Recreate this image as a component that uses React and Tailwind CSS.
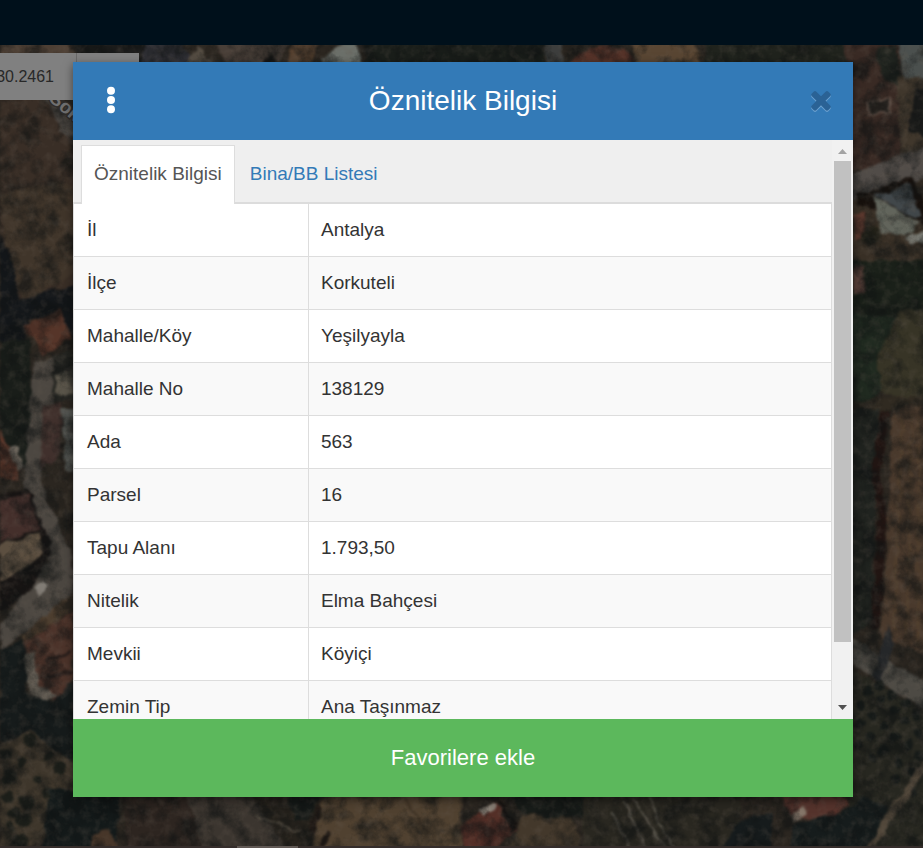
import React from "react";

const rows = [
  ["İl", "Antalya"],
  ["İlçe", "Korkuteli"],
  ["Mahalle/Köy", "Yeşilyayla"],
  ["Mahalle No", "138129"],
  ["Ada", "563"],
  ["Parsel", "16"],
  ["Tapu Alanı", "1.793,50"],
  ["Nitelik", "Elma Bahçesi"],
  ["Mevkii", "Köyiçi"],
  ["Zemin Tip", "Ana Taşınmaz"],
];

const leftTrees = [
  [10, 775, 7], [22, 762, 5], [8, 797, 6], [27, 802, 7], [14, 812, 6], [24, 820, 7],
  [48, 794, 6], [10, 828, 5], [38, 778, 4], [5, 780, 5], [50, 755, 5], [30, 740, 7],
  [60, 768, 6], [20, 842, 8], [6, 755, 6],
];

const orchard = [
  [862, 706], [872, 716], [884, 726], [896, 736], [908, 746], [919, 756],
  [868, 690], [880, 700], [893, 711], [905, 722], [917, 733],
  [880, 684], [892, 694], [905, 704], [917, 714],
  [858, 724], [870, 736], [884, 750], [898, 762], [912, 772],
  [858, 745], [872, 758], [896, 780], [914, 792],
];

function SatelliteMap() {
  return (
    <svg
      className="absolute inset-0 h-full w-full"
      viewBox="0 0 923 848"
      preserveAspectRatio="xMidYMid slice"
      aria-hidden="true"
    >
      <defs>
        <filter id="soil" x="0" y="0" width="100%" height="100%" colorInterpolationFilters="sRGB">
          <feTurbulence type="fractalNoise" baseFrequency="0.05" numOctaves="5" seed="8" />
          <feColorMatrix values="0 0 0 0 0.06  0 0 0 0 0.07  0 0 0 0 0.07  2.4 1.4 0 0 -1.6" />
        </filter>
        <filter id="grit" x="0" y="0" width="100%" height="100%" colorInterpolationFilters="sRGB">
          <feTurbulence type="fractalNoise" baseFrequency="0.11" numOctaves="3" seed="21" />
          <feColorMatrix values="0 0 0 0 0.4  0 0 0 0 0.36  0 0 0 0 0.32  0 1.8 0 0 -0.8" />
        </filter>
        <filter id="soft" x="-5%" y="-5%" width="110%" height="110%" colorInterpolationFilters="sRGB">
          <feTurbulence type="fractalNoise" baseFrequency="0.07" numOctaves="3" seed="4" result="n" />
          <feDisplacementMap in="SourceGraphic" in2="n" scale="9" xChannelSelector="R" yChannelSelector="G" />
          <feGaussianBlur stdDeviation="1" />
        </filter>
      </defs>
      <rect width="923" height="848" fill="#2b2620" />

      <g filter="url(#soft)">
        {/* western side */}
        <path d="M0 90L55 100L80 150V290L40 302L14 300L0 255Z" fill="#392e26" />
        <path d="M0 195L60 180L80 190V270L25 304L10 270Z" fill="#40352a" />
        <path d="M0 236L14 262L18 300L75 285V345L55 312L28 322L25 350H0Z" fill="#14171a" />
        <path d="M0 340H30L34 460L0 475Z" fill="#191d19" />
        <path d="M42 96L58 98L80 124V150L62 132Z" fill="#4d4843" />
        <path d="M24 326L60 309L71 340L42 356Z" fill="#563529" />
        <path d="M24 326L60 309L64 322L30 336Z" fill="#4d3026" />
        <path d="M35 362L52 358L54 400L40 480L73 560V600L0 650V625L50 560L24 484L30 400Z" fill="#4c4741" />
        <path d="M52 357L80 348V400L53 402Z" fill="#272723" />
        <path d="M55 376L75 370V392L58 396Z" fill="#5a554a" />
        <path d="M42 405L62 402L60 455L40 470Z" fill="#40302c" />
        <path d="M60 408H80V478L66 468Z" fill="#535551" />
        <path d="M0 430L20 465L18 482L0 478Z" fill="#593529" />
        <path d="M8 450L16 447L24 466L18 472Z" fill="#6d665d" />
        <path d="M0 494L28 488L52 550L30 592L0 612Z" fill="#171413" />
        <path d="M0 500L28 494L40 528L0 543Z" fill="#442f2b" />
        <path d="M0 545L38 532L44 552L26 568L0 582Z" fill="#5c4f40" />
        <path d="M34 590L44 580L48 584L38 596Z" fill="#817c75" />
        <path d="M22 636L75 590V606L30 648Z" fill="#4c3d2e" />
        <path d="M28 640L73 612V700L50 700L30 680L20 660Z" fill="#4c332a" />
        <path d="M22 655L36 650L38 684L56 696L42 704L24 680Z" fill="#625c53" />
        <path d="M45 662L70 652M46 678L72 672" stroke="#281e1b" strokeWidth="4" fill="none" />
        <path d="M0 650L24 640L26 690L50 704L73 680V800L0 740Z" fill="#161b1b" />
        <path d="M0 745L30 730L80 768V800L30 848H0Z" fill="#3e362b" />
        {leftTrees.map(([x, y, r]) => (
          <circle key={x + "-" + y} cx={x} cy={y} r={r} fill="#1c1e19" />
        ))}

        {/* strip above the dialog */}
        <path d="M0 40H70L78 68H0Z" fill="#4d3f34" />
        <path d="M72 40H150V68H80Z" fill="#1d1d1c" />
        <path d="M146 40H178L196 68H140Z" fill="#34343a" />
        <path d="M180 68L198 46L216 68Z" fill="#544c42" />
        <path d="M216 40H290L276 68H226Z" fill="#493f38" />
        <path d="M256 68L272 54L284 68Z" fill="#161514" />
        <path d="M292 40H322L308 68H286Z" fill="#55402f" />
        <path d="M322 60L342 45H356L366 68H328Z" fill="#6c706a" />
        <path d="M366 40H545V68H366Z" fill="#1a1e1a" />
        <path d="M545 40H562V68H548Z" fill="#3d3e3d" />
        <path d="M566 68L590 46H624L640 68Z" fill="#563329" />
        <path d="M628 40H690L706 68H638Z" fill="#594633" />
        <path d="M706 40H850V68H706Z" fill="#20231d" />

        {/* eastern side */}
        <path d="M845 40H900V170H845Z" fill="#392a24" />
        <path d="M876 50L896 45L902 88L884 80Z" fill="#20241f" />
        <path d="M898 40H930V84L905 88Z" fill="#4b504e" />
        <path d="M896 76L930 82V200H905Z" fill="#40372c" />
        <path d="M915 88H930V140L910 130Z" fill="#191a19" />
        <path d="M868 102L890 98L892 112L870 116Z" stroke="#605047" strokeWidth="2" fill="#211e1b" />
        <path d="M846 176L930 143V178L846 202Z" fill="#514c48" />
        <path d="M846 202L930 178V280H846Z" fill="#393026" />
        <path d="M858 194L913 178L930 214V226L858 205Z" fill="#17110d" />
        <path d="M873 195L910 184L920 219L900 210Z" fill="#41474a" />
        <path d="M873 196L920 222L911 233L880 234Z" fill="#62655c" />
        <path d="M853 215L865 212L868 236L853 240Z" fill="#5b382e" />
        <circle cx="872" cy="235" r="9" fill="#252319" />
        <path d="M905 236L930 230V242L908 244Z" fill="#767770" />
        <path d="M846 260H930V320H846Z" fill="#1a2019" />
        <path d="M853 265H862L866 292L853 296Z" fill="#594039" />
        <path d="M846 312L895 318L885 380L875 405H846Z" fill="#202a20" />
        <path d="M900 310H930V405L880 392L876 360Z" fill="#373426" />
        <path d="M846 402L930 393V412H846Z" fill="#302a21" />
        <path d="M893 412Q908 400 930 408V655L882 637L888 500Z" fill="#49392c" />
        <path d="M902 418L894 630M912 412L907 640M920 414L917 646" stroke="#57442f" strokeWidth="2" fill="none" opacity=".6" />
        <path d="M846 410H878L872 620L846 640Z" fill="#20231f" />
        <path d="M885 412L876 470L882 515L876 630" stroke="#211512" strokeWidth="9" fill="none" />
        <path d="M846 635L930 684V714L846 660Z" fill="#4d4a44" />
        <path d="M888 625L894 645L878 684L872 675Z" fill="#252729" />
        <path d="M846 665L930 716V855H846Z" fill="#272720" />
        {orchard.map(([x, y]) => (
          <circle key={x + "-" + y} cx={x} cy={y} r="5" fill="#161a18" />
        ))}
        <path d="M930 758L900 802L862 855" stroke="#51473a" strokeWidth="9" fill="none" />

        {/* strip below the dialog */}
        <path d="M50 790H120L115 855H42Z" fill="#141a1a" />
        <path d="M92 834L108 830L124 855H90Z" fill="#473629" />
        <path d="M122 790H200L205 855H128Z" fill="#2d2520" />
        <path d="M184 790H260L296 855H205Z" fill="#3b352f" />
        <path d="M248 790H320L312 855H290Z" fill="#26221c" />
        <path d="M256 816L300 832" stroke="#5b5347" strokeWidth="2" />
        <path d="M286 790H322L310 820H294Z" fill="#171b19" />
        <path d="M320 805L330 790H462V855H310Z" fill="#504130" />
        <path d="M312 832L320 808M322 845L330 832" stroke="#1e1814" strokeWidth="6" />
        <path d="M404 796L435 848" stroke="#3e3225" strokeWidth="2" />
        <path d="M460 826L494 802L515 831L488 855H466Z" fill="#542f27" />
        <path d="M478 810L494 803L496 808L482 816Z" fill="#8a8177" />
        <path d="M498 801L514 826L511 832" stroke="#171311" strokeWidth="4" fill="none" />
        <path d="M506 790H582V815L560 822L520 812Z" fill="#181c19" />
        <path d="M520 814L575 820L580 855H510Z" fill="#43382b" />
        <path d="M582 790H740V855H582Z" fill="#292720" />
        <path d="M612 812L632 852M624 802L648 852M632 798L668 852M648 797L675 852" stroke="#57534a" strokeWidth="2" fill="none" />
        <path d="M718 855L738 820L774 812L770 855Z" fill="#161b1c" />
        <path d="M780 792H840L849 806L828 820L792 818Z" fill="#55332c" />
        <path d="M791 817L803 808L806 813L795 822Z" fill="#857669" />
        <path d="M795 824L840 814L862 798L890 805L880 825L862 855H790Z" fill="#161c1c" />
      </g>

      <rect width="923" height="848" filter="url(#soil)" opacity=".6" />
      <rect width="923" height="848" filter="url(#grit)" opacity=".3" />
      <text
        x="48"
        y="100"
        transform="rotate(40 48 100)"
        className="text-[19px] font-bold"
        fill="#6f6f6f"
        stroke="#302c29"
        strokeWidth="3"
        paintOrder="stroke"
      >
        Sok.
      </text>
    </svg>
  );
}

function CloseIcon() {
  const d =
    "M1490 1322q0 40-28 68l-136 136q-28 28-68 28t-68-28l-294-294-294 294q-28 28-68 28t-68-28l-136-136q-28-28-28-68t28-68l294-294-294-294q-28-28-28-68t28-68l136-136q28-28 68-28t68 28l294 294 294-294q28-28 68-28t68 28l136 136q28 28 28 68t-28 68l-294 294 294 294q28 28 28 68z";
  return (
    <svg viewBox="302 366 1188 1270" className="h-[21px] w-5" aria-hidden="true">
      <path d={d} transform="translate(0 80)" fill="#6ba0cf" />
      <path d={d} fill="#2a6295" />
    </svg>
  );
}

function Scrollbar() {
  return (
    <div className="flex w-[21px] shrink-0 flex-col bg-[#f1f1f1]" aria-hidden="true">
      <div className="flex h-[21px] items-center justify-center pt-[2px]">
        <svg width="9" height="5" viewBox="0 0 9 5">
          <path d="M0 5L4.500 0L9 5Z" fill="#a3a3a3" />
        </svg>
      </div>
      <div className="mx-[2px] grow-[481] bg-[#c1c1c1]" />
      <div className="grow-[56]" />
      <div className="flex h-[21px] items-center justify-center pb-[2px]">
        <svg width="9" height="5" viewBox="0 0 9 5">
          <path d="M0 0L4.500 5L9 0Z" fill="#505050" />
        </svg>
      </div>
    </div>
  );
}

function Dialog() {
  return (
    <section
      role="dialog"
      aria-labelledby="dialog-title"
      className="flex h-full flex-col shadow-[0_3px_9px_rgba(0,0,0,0.5)]"
    >
      <header className="flex h-[78px] shrink-0 items-center justify-between bg-[#337ab7] pl-[34px] pr-[22px] text-white">
        <button type="button" aria-label="Menü" className="flex w-2 justify-center pb-[2px]">
          <svg width="8" height="28" viewBox="0 0 8 28" fill="#fff">
            <circle cx="4" cy="4.700" r="4" />
            <circle cx="4" cy="14" r="4" />
            <circle cx="4" cy="23.300" r="4" />
          </svg>
        </button>
        <h1 id="dialog-title" className="text-[28px] leading-8">
          Öznitelik Bilgisi
        </h1>
        <button type="button" aria-label="Kapat">
          <CloseIcon />
        </button>
      </header>

      <div className="flex min-h-0 flex-1">
        <div className="min-w-0 flex-1 overflow-hidden bg-[#efefef]">
          <div role="tablist" className="flex h-16 gap-[2px] border-b-2 border-[#dcdcdc] pl-2 pt-[5px]">
            <button
              type="button"
              role="tab"
              aria-selected="true"
              className="h-[59px] border border-b-0 border-[#dddddd] bg-white px-3 pb-[3px] text-[#555555]"
            >
              Öznitelik Bilgisi
            </button>
            <button
              type="button"
              role="tab"
              aria-selected="false"
              className="h-[59px] border border-b-0 border-transparent px-3 pb-[3px] text-[#337ab7]"
            >
              Bina/BB Listesi
            </button>
          </div>
          <table className="w-full border-separate border-spacing-0 border-r border-[#dddddd] text-left text-[#333333]">
            <tbody>
              {rows.map(([label, value]) => (
                <tr key={label} className="bg-white even:bg-[#f9f9f9]">
                  <th scope="row" className="h-[53px] w-[31%] border-b border-l border-[#dddddd] px-[13px] font-normal">
                    {label}
                  </th>
                  <td className="h-[53px] border-b border-l border-[#dddddd] px-3">{value}</td>
                </tr>
              ))}
            </tbody>
          </table>
        </div>
        <Scrollbar />
      </div>

      <button type="button" className="h-[78px] shrink-0 bg-[#5cb85c] text-[22px] text-white">
        Favorilere ekle
      </button>
    </section>
  );
}

export default function App() {
  return (
    <div className="relative flex h-screen flex-col overflow-hidden bg-[#2b2620] font-['Liberation_Sans',Arial,sans-serif] text-[19px] leading-7">
      <SatelliteMap />
      <div className="relative h-[45px] shrink-0 bg-[#00101b]" />
      <div className="relative flex flex-1 items-start pt-2">
        <div className="flex h-[47px] w-[139px] bg-[#808080] text-base text-[#282828]">
          <div className="flex w-[77px] items-center justify-end overflow-hidden border-r border-[#6a6a6a] pr-[22px]">
            30.2461
          </div>
        </div>
      </div>
      <div className="relative h-[2px] shrink-0 bg-[#352d2b] pl-[237px]">
        <div className="h-full w-[61px] bg-[#605854]" />
      </div>
      <div className="absolute inset-0 pb-[51px] pl-[73px] pr-[70px] pt-[62px]">
        <Dialog />
      </div>
    </div>
  );
}
